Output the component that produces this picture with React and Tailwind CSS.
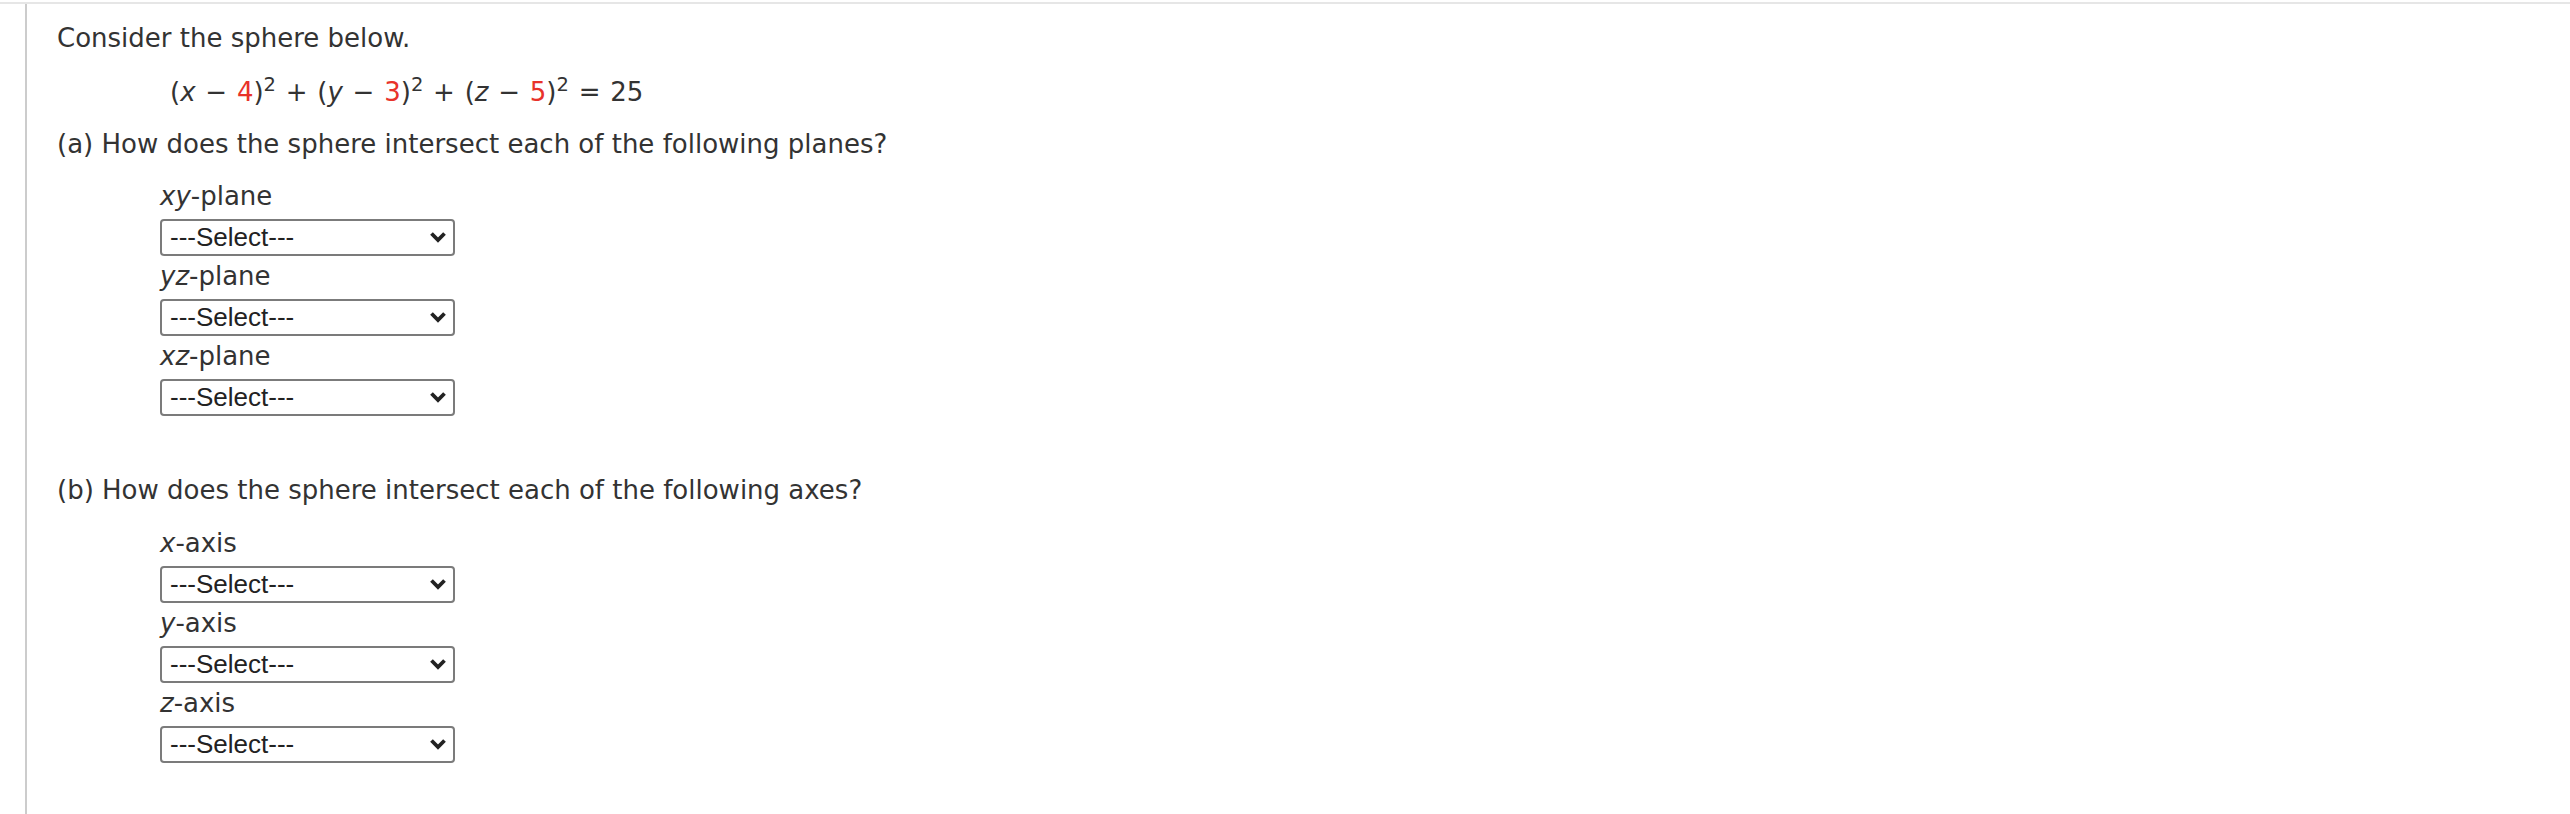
import React from 'react';

const Red = ({ children }) => <span className="text-[#e8322a]">{children}</span>;

const Dropdown = () => (
    <div className="relative w-[295px] h-[37px]">
        <select
            defaultValue=""
            className="appearance-none w-full h-full border-2 border-[#7b7b7b] rounded-[4px] bg-white pl-[8px] text-[26px] leading-none text-[#222] font-['Liberation_Sans',Arial,sans-serif]"
        >
            <option value="">---Select---</option>
            <option value="point">at a point</option>
            <option value="circle">in a circle</option>
            <option value="none">does not intersect</option>
        </select>
        <svg
            width="18"
            height="12"
            viewBox="0 0 18 12"
            className="pointer-events-none absolute right-[8px] top-1/2 -translate-y-1/2"
        >
            <polyline points="2.5,2.5 9,9 15.5,2.5" fill="none" stroke="#222" strokeWidth="3.8" />
        </svg>
    </div>
);

const Field = ({ label }) => (
    <div>
        <div className="leading-[43px]">{label}</div>
        <Dropdown />
    </div>
);

const planes = [
    { id: 'xy', label: <><i>xy</i>-plane</> },
    { id: 'yz', label: <><i>yz</i>-plane</> },
    { id: 'xz', label: <><i>xz</i>-plane</> },
];

const axes = [
    { id: 'x', label: <><i>x</i>-axis</> },
    { id: 'y', label: <><i>y</i>-axis</> },
    { id: 'z', label: <><i>z</i>-axis</> },
];

export default function App() {
    return (
        <div className="w-full min-h-[814px] bg-white pt-[2px] font-['DejaVu_Sans',Verdana,sans-serif] text-[26px] text-[#333]">
            <div className="border-t-2 border-[#e6e6e6]">
                <div className="ml-[25px] h-[810px] border-l-2 border-[#cccccc] pl-[30px] pt-[19px]">
                    <p className="leading-[30px]">Consider the sphere below.</p>

                    {/* sphere equation */}
                    <div className="mt-[24px] pl-[113px] leading-[30px] h-[30px] whitespace-nowrap [word-spacing:1.5px]">
                        (<i>x</i> − <Red>4</Red>)<sup>2</sup> + (<i>y</i> − <Red>3</Red>)<sup>2</sup> + (<i>z</i> − <Red>5</Red>)<sup>2</sup> = 25
                    </div>

                    <p className="mt-[22px] leading-[30px]">(a) How does the sphere intersect each of the following planes?</p>
                    <div className="mt-[16px] ml-[103px] flex flex-col">
                        {planes.map(p => (
                            <Field key={p.id} label={p.label} />
                        ))}
                    </div>

                    <p className="mt-[60px] leading-[30px]">(b) How does the sphere intersect each of the following axes?</p>
                    <div className="mt-[17px] ml-[103px] flex flex-col">
                        {axes.map(a => (
                            <Field key={a.id} label={a.label} />
                        ))}
                    </div>
                </div>
            </div>
        </div>
    );
}
